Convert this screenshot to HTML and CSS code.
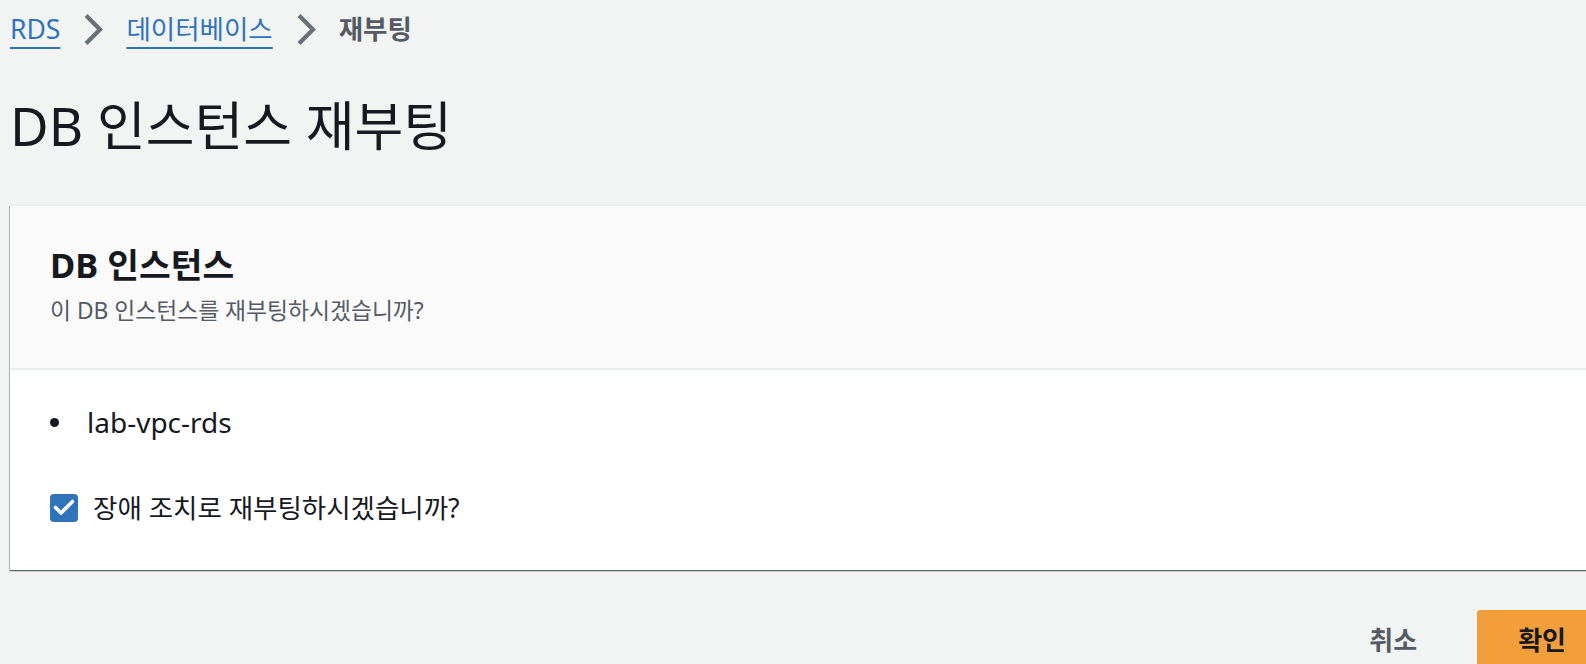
FILE: index.html
```html
<!DOCTYPE html>
<html lang="ko">
<head>
<meta charset="utf-8">
<title>DB 인스턴스 재부팅</title>
<link rel="stylesheet" href="styles.css">
</head>
<body>
<div class="page">
  <nav class="breadcrumbs">
    <a class="crumb-link" href="#">RDS</a>
    <svg class="chevron" viewBox="0 0 21 31" width="21" height="31"><path d="M3.5 3 L16 15.5 L3.5 28" /></svg>
    <a class="crumb-link" href="#">데이터베이스</a>
    <svg class="chevron" viewBox="0 0 21 31" width="21" height="31"><path d="M3.5 3 L16 15.5 L3.5 28" /></svg>
    <span class="crumb-current">재부팅</span>
  </nav>

  <h1 class="page-title">DB 인스턴스 재부팅</h1>

  <section class="card">
    <header class="card-header">
      <h2 class="card-title">DB 인스턴스</h2>
      <p class="card-desc">이 DB 인스턴스를 재부팅하시겠습니까?</p>
    </header>
    <div class="card-body">
      <ul class="instance-list">
        <li class="instance-item">lab-vpc-rds</li>
      </ul>
      <label class="check-row">
        <span class="checkbox">
          <svg viewBox="0 0 28 28" width="28" height="28"><path d="M5.5 13.5 L11 19 L22.5 7.5" /></svg>
        </span>
        <span class="check-label">장애 조치로 재부팅하시겠습니까?</span>
      </label>
    </div>
  </section>

  <div class="actions">
    <button class="btn btn-link" type="button">취소</button>
    <button class="btn btn-primary" type="button">확인</button>
  </div>
</div>
</body>
</html>
```

FILE: styles.css
```css
html, body {
  margin: 0;
  padding: 0;
}

body {
  background: #f2f3f3;
  font-family: "Noto Sans", "Noto Sans CJK KR", sans-serif;
  color: #16191f;
  overflow: hidden;
  width: 1586px;
  height: 664px;
}

.page {
  width: 1597px;
  padding-left: 10px;
}

.breadcrumbs {
  display: flex;
  align-items: center;
  padding-top: 13px;
  height: 32px;
  font-size: 26.5px;
  line-height: 32px;
}

.crumb-link {
  color: #2f73ba;
  text-decoration: underline;
  text-decoration-thickness: 2px;
  text-underline-offset: 8px;
}

.chevron {
  margin: 0 21px 0 24px;
  flex: none;
}

.chevron path {
  fill: none;
  stroke: #687078;
  stroke-width: 4.2;
  stroke-linecap: square;
  stroke-linejoin: miter;
}

.crumb-current {
  color: #545b64;
  font-weight: 700;
}

.page-title {
  margin: 51px 0 0;
  font-size: 53px;
  line-height: 60px;
  font-weight: 400;
  color: #16191f;
}

.card {
  margin-top: 49px;
  background: #ffffff;
  border-top: 1px solid #eaeded;
  box-shadow: 0 1px 1px 0 rgba(0, 28, 36, 0.5), 1px 1px 1px 0 rgba(0, 28, 36, 0.15), -1px 1px 1px 0 rgba(0, 28, 36, 0.2);
}

.card-header {
  background: #fafafa;
  padding: 38px 40px 42px;
  border-bottom: 2px solid #eaeded;
}

.card-title {
  margin: 0;
  font-size: 34.5px;
  line-height: 42px;
  font-weight: 700;
}

.card-desc {
  margin: 10px 0 0;
  font-size: 22.8px;
  line-height: 30px;
  color: #545b64;
}

.card-body {
  padding: 34px 40px 45px;
}

.instance-list {
  list-style: none;
  margin: 0;
  padding: 0;
}

.instance-item {
  display: flex;
  align-items: center;
  font-size: 28px;
  line-height: 36px;
}

.instance-item::before {
  content: "";
  width: 9px;
  height: 9px;
  border-radius: 50%;
  background: #16191f;
  margin-right: 28px;
  flex: none;
}

.check-row {
  display: flex;
  align-items: center;
  margin-top: 51px;
  gap: 15px;
}

.checkbox {
  width: 28px;
  height: 28px;
  border-radius: 4px;
  background: #2f73ba;
  display: block;
  flex: none;
}

.checkbox svg {
  display: block;
}

.checkbox path {
  fill: none;
  stroke: #ffffff;
  stroke-width: 3.6;
  stroke-linecap: round;
  stroke-linejoin: round;
}

.check-label {
  font-size: 26.5px;
  line-height: 34px;
}

.actions {
  display: flex;
  justify-content: flex-end;
  gap: 19px;
  margin-top: 40px;
}

.btn {
  font-family: "Noto Sans", "Noto Sans CJK KR", sans-serif;
  font-size: 26px;
  line-height: 32px;
  font-weight: 700;
  padding: 14px 41px;
  border: none;
  border-radius: 3px;
  cursor: pointer;
}

.btn-link {
  background: transparent;
  color: #545b64;
}

.btn-primary {
  background: #f29e3a;
  color: #16191f;
}
```
